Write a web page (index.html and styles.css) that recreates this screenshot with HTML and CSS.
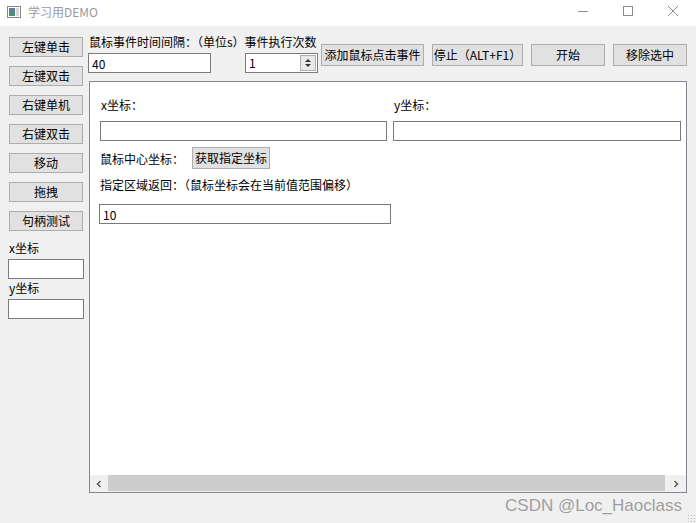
FILE: index.html
```html
<!DOCTYPE html>
<html lang="zh-CN">
<head>
  <meta charset="UTF-8">
  <title>学习用DEMO</title>
  <link rel="stylesheet" href="styles.css">
</head>
<body>
  <div class="titlebar">
    <svg class="app-icon" width="14" height="12" viewBox="0 0 14 12">
      <rect x="0.5" y="0.5" width="13" height="11" fill="#fff" stroke="#8a8a8a"/>
      <rect x="2" y="2" width="6" height="8" fill="#4f8f7a"/>
      <rect x="2" y="2" width="6" height="3" fill="#5a7fb0"/>
      <rect x="9" y="2" width="3" height="8" fill="#d8d8d8"/>
    </svg>
    <span class="title">学习用DEMO</span>
    <div class="win-controls">
      <svg width="12" height="12" viewBox="0 0 12 12"><line x1="1" y1="6.5" x2="11" y2="6.5" stroke="#8c8c8c"/></svg>
      <svg width="12" height="12" viewBox="0 0 12 12"><rect x="1.5" y="1.5" width="9" height="9" fill="none" stroke="#8c8c8c"/></svg>
      <svg width="12" height="12" viewBox="0 0 12 12"><path d="M1 1 L11 11 M11 1 L1 11" stroke="#8c8c8c"/></svg>
    </div>
  </div>

  <div class="client">
    <div class="sidebar">
      <button class="btn side-btn">左键单击</button>
      <button class="btn side-btn">左键双击</button>
      <button class="btn side-btn">右键单机</button>
      <button class="btn side-btn">右键双击</button>
      <button class="btn side-btn">移动</button>
      <button class="btn side-btn">拖拽</button>
      <button class="btn side-btn">句柄测试</button>
      <div class="side-label first">x坐标</div>
      <input class="field side-field" type="text">
      <div class="side-label">y坐标</div>
      <input class="field side-field" type="text">
    </div>

    <div class="content">
      <div class="toprow">
        <div class="params">
          <div class="params-label">鼠标事件时间间隔：（单位s）事件执行次数</div>
          <div class="params-inputs">
            <input class="field interval" type="text" value="40">
            <div class="field spin">
              <span class="spin-value">1</span>
              <span class="spin-arrows">
                <span class="spin-up"></span>
                <span class="spin-down"></span>
              </span>
            </div>
          </div>
        </div>
        <div class="actions">
          <button class="btn act-add">添加鼠标点击事件</button>
          <button class="btn act-stop">停止（ALT+F1）</button>
          <button class="btn act-start">开始</button>
          <button class="btn act-remove">移除选中</button>
        </div>
      </div>

      <div class="panel">
        <div class="coord-grid">
          <div class="coord-label">x坐标：</div>
          <div class="coord-label">y坐标：</div>
          <input class="field coord-x" type="text">
          <input class="field coord-y" type="text">
        </div>
        <div class="center-row">
          <span>鼠标中心坐标：</span>
          <button class="btn get-btn">获取指定坐标</button>
        </div>
        <div class="range-label">指定区域返回：（鼠标坐标会在当前值范围偏移）</div>
        <input class="field range" type="text" value="10">
        <div class="filler"></div>
        <div class="hscroll">
          <span class="arrow left">
            <svg width="8" height="8" viewBox="0 0 8 8"><path d="M5.5 1 L2.5 4 L5.5 7" fill="none" stroke="#606060" stroke-width="1.6"/></svg>
          </span>
          <span class="thumb"></span>
          <span class="arrow right">
            <svg width="8" height="8" viewBox="0 0 8 8"><path d="M2.5 1 L5.5 4 L2.5 7" fill="none" stroke="#606060" stroke-width="1.6"/></svg>
          </span>
        </div>
      </div>

      <div class="footer">
        <span class="watermark">CSDN @Loc_Haoclass</span>
      </div>
    </div>
  </div>
  <div class="grip"></div>
</body>
</html>
```

FILE: styles.css
```css
* {
  box-sizing: border-box;
}
body {
  margin: 0;
  width: 696px;
  height: 523px;
  overflow: hidden;
  background-color: #f0f0f0;
  font-family: "Noto Sans CJK SC", "Liberation Sans", sans-serif;
  font-size: 12px;
  color: #000;
  position: relative;
}
.titlebar {
  height: 26px;
  background-color: #fff;
  display: flex;
  align-items: center;
  padding-left: 7px;
}
.app-icon {
  margin-top: -2px;
}
.title {
  margin-left: 7px;
  color: #9a9a9a;
  font-size: 12px;
  line-height: 16px;
  margin-top: -3px;
}
.win-controls {
  margin-left: auto;
  display: flex;
  gap: 33px;
  padding-right: 17px;
  margin-top: -4px;
}
.client {
  display: flex;
  padding: 11px 9px 0 8px;
}
.sidebar {
  width: 76px;
  display: flex;
  flex-direction: column;
}
.btn {
  font-family: "Noto Sans CJK SC", "Liberation Sans", sans-serif;
  font-size: 12px;
  background-color: #e1e1e1;
  border: 1px solid #adadad;
  color: #000;
  padding: 0;
  margin: 0;
  line-height: 14px;
  border-radius: 0;
  white-space: nowrap;
}
.side-btn {
  width: 74px;
  height: 20px;
  margin-left: 1px;
  margin-bottom: 9px;
}
.field {
  font-family: "Noto Sans CJK SC", "Liberation Sans", sans-serif;
  font-size: 12px;
  height: 20px;
  border: 1px solid #7a7a7a;
  background-color: #fff;
  padding: 0 3px;
  margin: 0;
  outline: none;
  color: #000;
}
.side-label {
  line-height: 14px;
  margin-top: 2px;
  padding-left: 1px;
}
.side-label.first {
  margin-top: 1px;
}
.side-field {
  width: 76px;
  margin-top: 4px;
}
.content {
  margin-left: 4px;
  width: 599px;
  display: flex;
  flex-direction: column;
}
.toprow {
  display: flex;
  height: 36px;
}
.params {
  width: 236px;
}
.params-label {
  line-height: 14px;
  margin-left: 1px;
  white-space: nowrap;
  margin-top: -2px;
}
.params-inputs {
  display: flex;
  margin-top: 4px;
}
.interval {
  width: 123px;
}
.spin {
  width: 73px;
  margin-left: 34px;
  display: flex;
  align-items: center;
  padding: 0 1px 0 3px;
}
.spin-value {
  flex: 1;
  line-height: 14px;
}
.spin-arrows {
  width: 16px;
  height: 16px;
  border: 1px solid #adadad;
  background-color: #e8e8e8;
  display: flex;
  flex-direction: column;
  align-items: center;
  justify-content: space-evenly;
}
.spin-up {
  width: 0;
  height: 0;
  border-left: 3px solid transparent;
  border-right: 3px solid transparent;
  border-bottom: 3px solid #333;
}
.spin-down {
  width: 0;
  height: 0;
  border-left: 3px solid transparent;
  border-right: 3px solid transparent;
  border-top: 3px solid #333;
}
.actions {
  display: flex;
  gap: 8px;
  margin-top: 7px;
}
.actions .btn {
  height: 22px;
}
.act-add {
  width: 103px;
}
.act-stop {
  width: 91px;
}
.act-start,
.act-remove {
  width: 74px;
}
.panel {
  margin-top: 8px;
  margin-left: 1px;
  width: 598px;
  height: 412px;
  background-color: #fff;
  border: 1px solid #828790;
  display: flex;
  flex-direction: column;
  padding: 15px 0 0 10px;
}
.coord-grid {
  display: grid;
  grid-template-columns: 287px 288px;
  column-gap: 6px;
  row-gap: 8px;
}
.coord-label {
  line-height: 16px;
  padding-left: 1px;
}
.center-row {
  display: flex;
  align-items: center;
  margin-top: 6px;
}
.get-btn {
  height: 22px;
  width: 78px;
  margin-left: 8px;
}
.range-label {
  line-height: 16px;
  margin-top: 8px;
}
.range {
  width: 292px;
  margin-top: 11px;
  margin-left: -1px;
}
.filler {
  flex: 1;
}
.hscroll {
  margin-left: -10px;
  height: 17px;
  display: flex;
  background-color: #f0f0f0;
}
.arrow {
  display: flex;
  align-items: center;
  justify-content: center;
}
.arrow.left {
  width: 18px;
}
.arrow.right {
  width: 21px;
}
.thumb {
  flex: 1;
  background-color: #cdcdcd;
  margin-bottom: 1px;
}
.footer {
  display: flex;
  justify-content: flex-end;
  padding-right: 5px;
  margin-top: 3px;
}
.watermark {
  font-family: "Liberation Sans", Arial, sans-serif;
  font-size: 17px;
  line-height: 20px;
  color: #9c9c9c;
  text-shadow: 0 0 1px #fff;
}
.grip {
  position: absolute;
  right: 1px;
  bottom: 1px;
  width: 8px;
  height: 8px;
  background-image: radial-gradient(#bdbdbd 0.8px, transparent 1px);
  background-size: 3px 3px;
}
```
